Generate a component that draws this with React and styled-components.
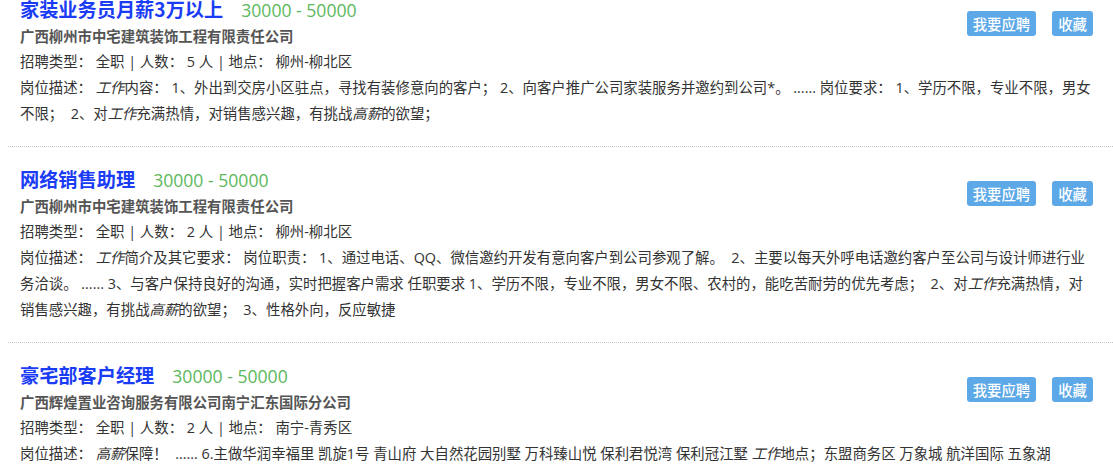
import styled, { createGlobalStyle } from "styled-components";

const GlobalStyle = createGlobalStyle`
  html, body {
    margin: 0;
    padding: 0;
    overflow: hidden;
    background: #fff;
  }
  body {
    font-family: "Open Sans", "Noto Sans CJK SC", sans-serif;
    font-size: 14.4px;
    color: #333;
  }
`;

const jobs = [
  {
    title: "家装业务员月薪3万以上",
    salary: "30000 - 50000",
    company: "广西柳州市中宅建筑装饰工程有限责任公司",
    count: 5,
    place: "柳州-柳北区",
    desc: [
      <em key="a">工作</em>,
      "内容： 1、外出到交房小区驻点，寻找有装修意向的客户； 2、向客户推广公司家装服务并邀约到公司*。 ...... 岗位要求： 1、学历不限，专业不限，男女不限；\u00a0 2、对",
      <em key="b">工作</em>,
      "充满热情，对销售感兴趣，有挑战",
      <em key="c">高薪</em>,
      "的欲望；",
    ],
  },
  {
    title: "网络销售助理",
    salary: "30000 - 50000",
    company: "广西柳州市中宅建筑装饰工程有限责任公司",
    count: 2,
    place: "柳州-柳北区",
    desc: [
      <em key="a">工作</em>,
      "简介及其它要求： 岗位职责： 1、通过电话、QQ、微信邀约开发有意向客户到公司参观了解。\u00a0 2、主要以每天外呼电话邀约客户至公司与设计师进行业务洽谈。 ...... 3、与客户保持良好的沟通，实时把握客户需求 任职要求 1、学历不限，专业不限，男女不限、农村的，能吃苦耐劳的优先考虑；\u00a0 2、对",
      <em key="b">工作</em>,
      "充满热情，对销售感兴趣，有挑战",
      <em key="c">高薪</em>,
      "的欲望；\u00a0 3、性格外向，反应敏捷",
    ],
  },
  {
    title: "豪宅部客户经理",
    salary: "30000 - 50000",
    company: "广西辉煌置业咨询服务有限公司南宁汇东国际分公司",
    count: 2,
    place: "南宁-青秀区",
    desc: [
      <em key="a">高薪</em>,
      "保障！\u00a0 ...... 6.主做华润幸福里 凯旋1号 青山府 大自然花园别墅 万科臻山悦 保利君悦湾 保利冠江墅 ",
      <em key="b">工作</em>,
      "地点；东盟商务区 万象城 航洋国际 五象湖",
    ],
  },
];

export default function App() {
  return (
    <>
      <GlobalStyle />
      <JobList>
        {jobs.map((job) => (
          <JobItem key={job.title}>
            <Actions>
              <ActionButton>我要应聘</ActionButton>
              <ActionButton>收藏</ActionButton>
            </Actions>
            <Title>
              {job.title}
              <Salary>{job.salary}</Salary>
            </Title>
            <Company>{job.company}</Company>
            <Line>
              招聘类型： 全职 | 人数：{" "}{job.count} 人 | 地点： {job.place}
            </Line>
            <Line>
              岗位描述： {job.desc}
            </Line>
          </JobItem>
        ))}
      </JobList>
    </>
  );
}

const JobList = styled.ul`
  margin: -23px 0 0;
  padding: 0 0 0 8px;
`;

const JobItem = styled.li`
  list-style: none;
  padding: 17px 18px 19px 12px;
  border-bottom: 1px dotted #c4c4c4;
`;

const Actions = styled.div`
  float: right;
  display: flex;
  gap: 16px;
  margin: 17px 2px 0 0;
`;

const ActionButton = styled.button`
  height: 25px;
  padding: 0 6px;
  border: none;
  border-radius: 3px;
  background: #5da8e6;
  color: #fff;
  font-family: "Noto Sans CJK SC", sans-serif;
  font-size: 14.4px;
  font-weight: 500;
  line-height: 25px;
  cursor: pointer;
`;

const Title = styled.h3`
  margin: 0;
  font-family: "Noto Sans CJK SC", sans-serif;
  font-size: 19.2px;
  font-weight: 700;
  line-height: 30px;
  color: #1a3cf5;
`;

const Salary = styled.span`
  margin-left: 18px;
  font-family: "Open Sans", sans-serif;
  font-size: 17.6px;
  font-weight: 400;
  color: #5cb85c;
`;

const Company = styled.div`
  font-weight: 700;
  line-height: 24px;
  color: #555;
`;

const Line = styled.div`
  line-height: 26px;
  color: #333;

  em {
    font-style: italic;
  }
`;
